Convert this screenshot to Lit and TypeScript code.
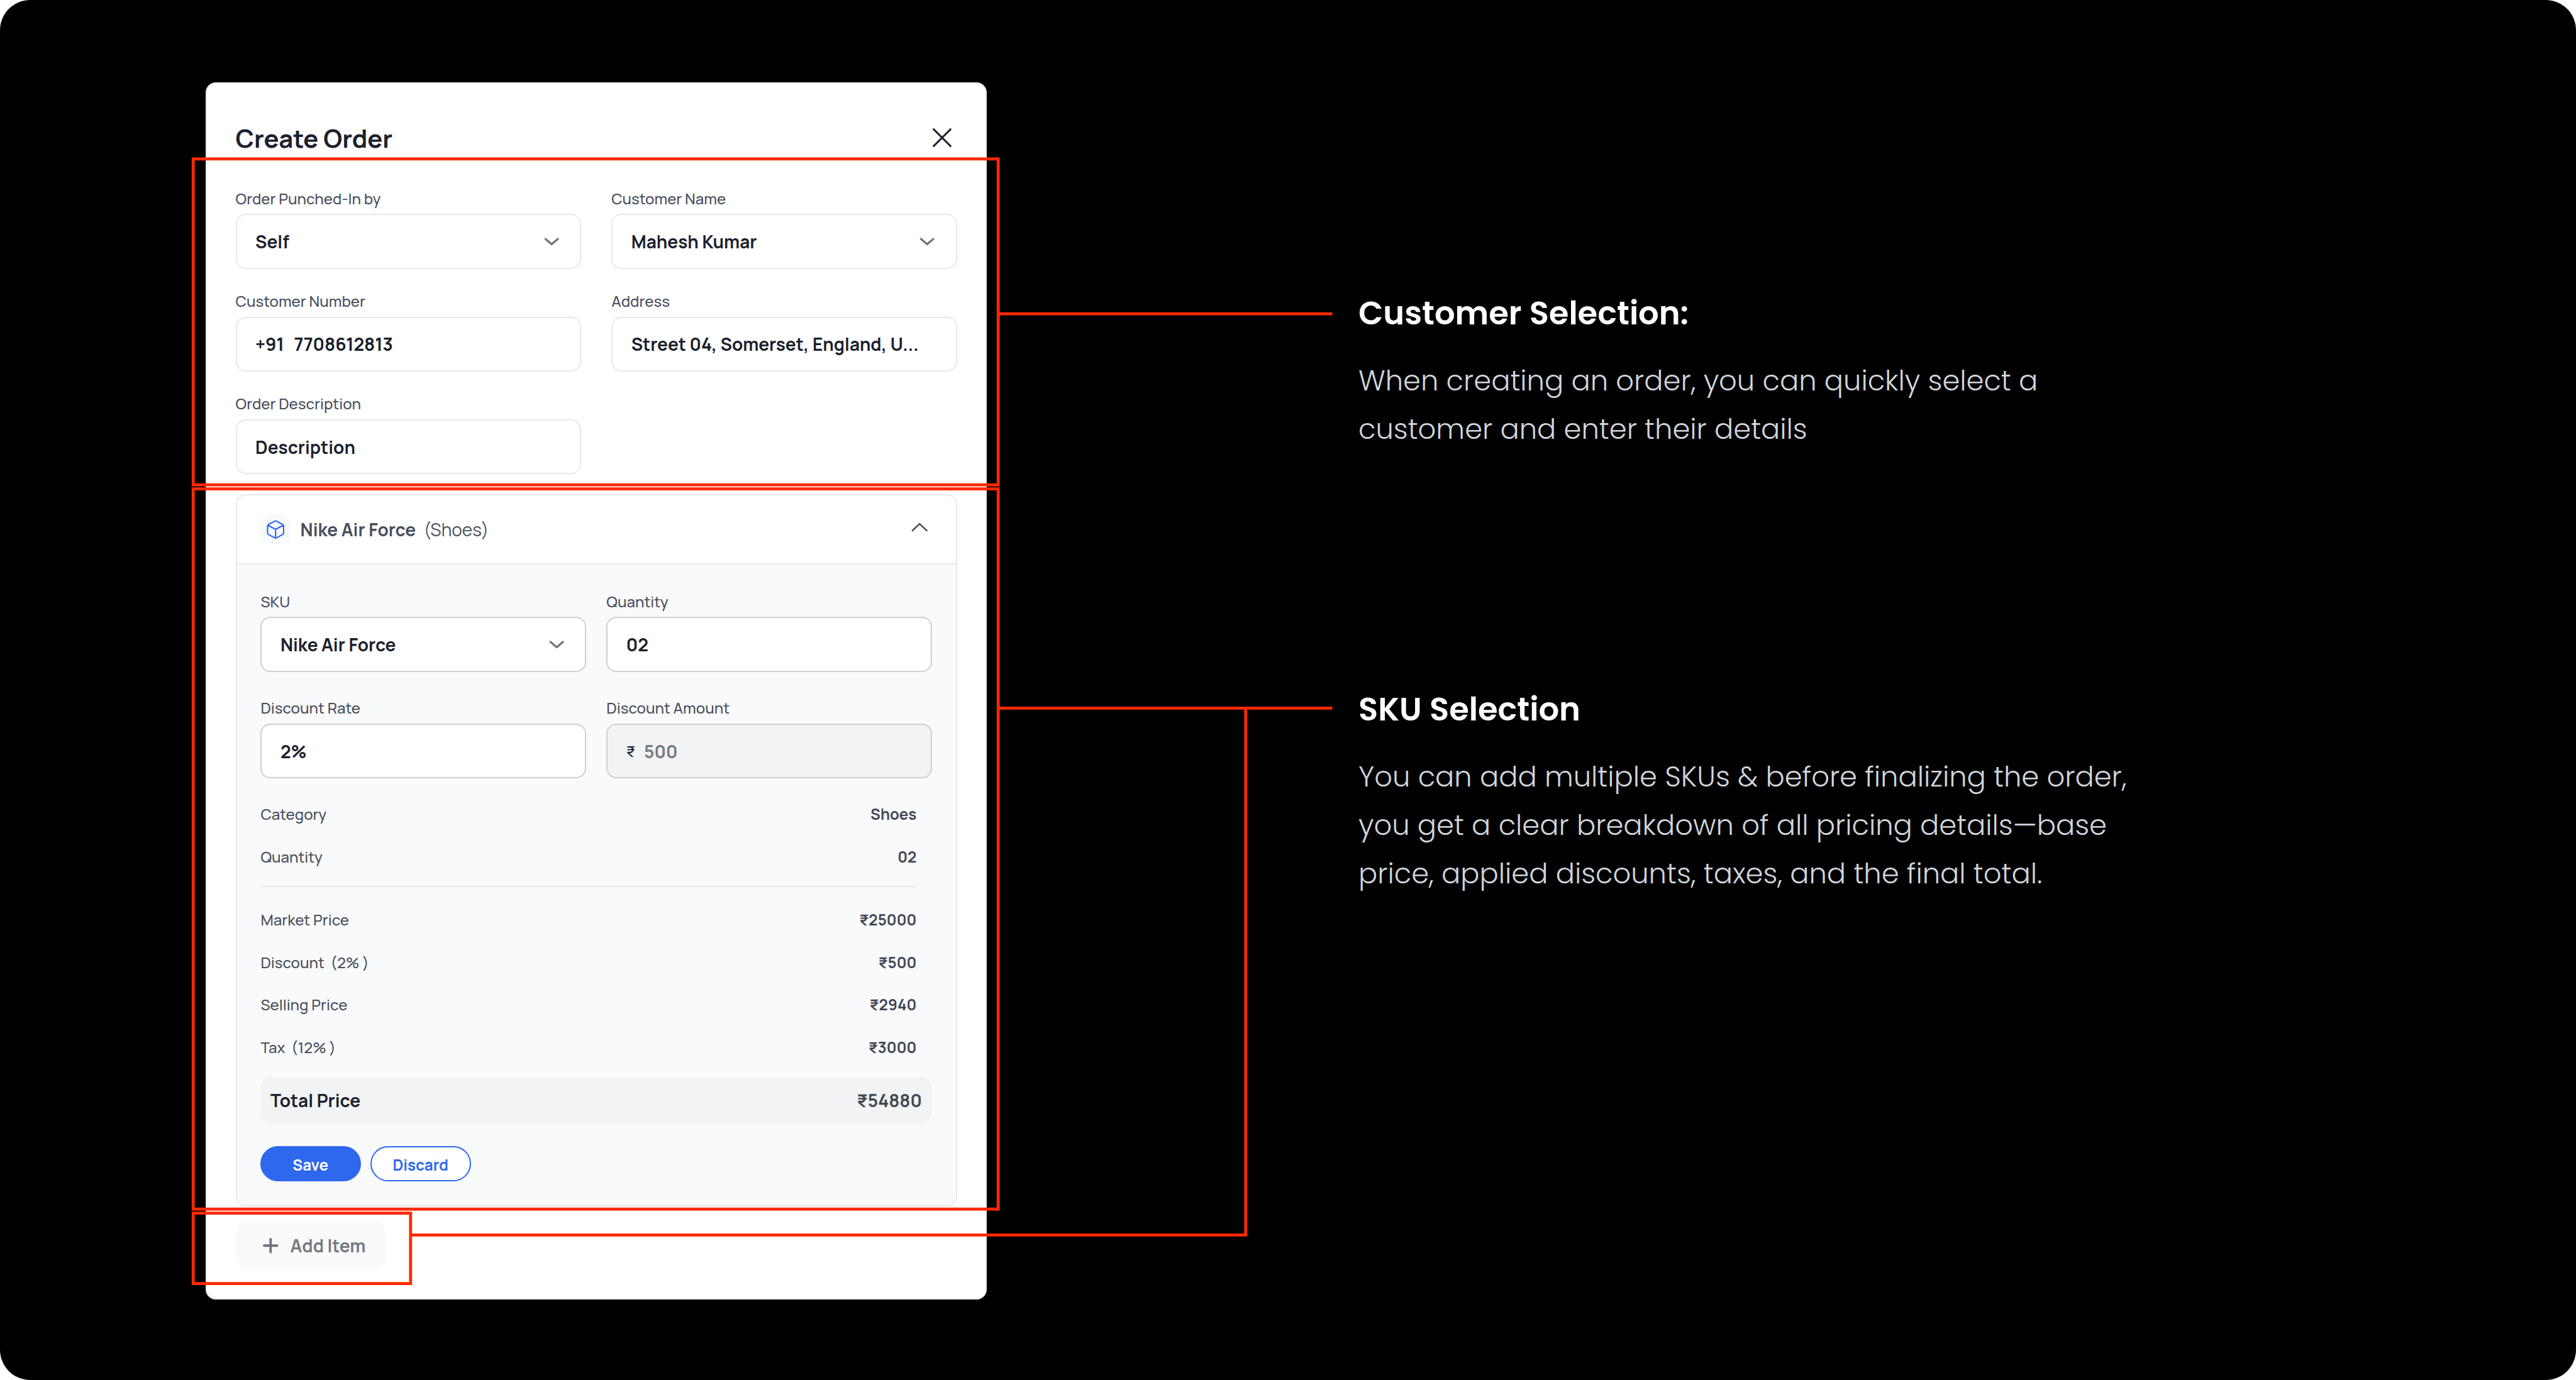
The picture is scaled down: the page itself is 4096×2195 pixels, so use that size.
import { LitElement, html, css, nothing } from "lit";
import { customElement } from "lit/decorators.js";

interface Field {
  label: string;
  value: string;
  select?: boolean;
  prefix?: string;
  disabled?: boolean;
}

interface Line {
  label: string;
  value: string;
}

const customerFields: Field[] = [
  { label: "Order Punched-In by", value: "Self", select: true },
  { label: "Customer Name", value: "Mahesh Kumar", select: true },
  { label: "Customer Number", value: "+91  7708612813" },
  { label: "Address", value: "Street 04, Somerset, England, U..." },
  { label: "Order Description", value: "Description" },
];

const skuFields: Field[] = [
  { label: "SKU", value: "Nike Air Force", select: true },
  { label: "Quantity", value: "02" },
  { label: "Discount Rate", value: "2%" },
  { label: "Discount Amount", value: "500", prefix: "₹", disabled: true },
];

const summary: Line[] = [
  { label: "Category", value: "Shoes" },
  { label: "Quantity", value: "02" },
];

const pricing: Line[] = [
  { label: "Market Price", value: "₹25000" },
  { label: "Discount  (2% )", value: "₹500" },
  { label: "Selling Price", value: "₹2940" },
  { label: "Tax  (12% )", value: "₹3000" },
];

const notes = [
  {
    title: "Customer Selection:",
    lines: ["When creating an order, you can quickly select a", "customer and enter their details"],
  },
  {
    title: "SKU Selection",
    lines: [
      "You can add multiple SKUs & before finalizing the order,",
      "you get a clear breakdown of all pricing details—base",
      "price, applied discounts, taxes, and the final total.",
    ],
  },
];

@customElement("app-root")
export class AppRoot extends LitElement {
  static styles = css`
    :host {
      display: block;
      background: #fff;
      font-family: "Manrope", "Inter", sans-serif;
      color: #1b212d;
    }
    * {
      box-sizing: border-box;
    }
    svg {
      display: block;
      flex: none;
      fill: none;
      stroke-linecap: round;
      stroke-linejoin: round;
    }
    .stage {
      position: relative;
      display: flex;
      align-items: flex-start;
      width: 4096px;
      height: 2195px;
      padding: 131.2px 0 0 326.5px;
      background: #000;
      border-radius: 48px;
      overflow: hidden;
    }
    .panel {
      width: 1242.6px;
      height: 1935.6px;
      padding: 62px 45.3px 0 46.1px;
      background: #fff;
      border: 2px solid #e9eaec;
      border-radius: 16px;
      flex: none;
    }
    .head {
      display: flex;
      align-items: center;
      justify-content: space-between;
      height: 48px;
      margin-bottom: 55.4px;
    }
    .title {
      padding-top: 2px;
      font-size: 39.9px;
      font-weight: 700;
      line-height: 56px;
    }
    .close {
      width: 48px;
      height: 48px;
      stroke: #1b212d;
      stroke-width: 1.45;
    }
    .grid {
      display: grid;
      grid-template-columns: 1fr 1fr;
      gap: 34.45px 48px;
    }
    .grid.sku {
      gap: 40.6px 32.4px;
    }
    .field {
      display: flex;
      flex-direction: column;
      gap: 8.8px;
    }
    .label {
      font-size: 24px;
      font-weight: 500;
      line-height: 33px;
      color: #4a505c;
      white-space: pre;
    }
    .box {
      display: flex;
      align-items: center;
      justify-content: space-between;
      height: 87.2px;
      padding: 0 29px 0 29.5px;
      background: #fff;
      border: 2px solid #e7e8ea;
      border-radius: 16px;
    }
    .sku .box {
      border-color: #cdcfd2;
    }
    .sku .box.disabled {
      background: #f2f3f5;
      justify-content: flex-start;
      gap: 14px;
    }
    .value {
      font-size: 28px;
      font-weight: 700;
      line-height: 38px;
      white-space: pre;
    }
    .phone {
      word-spacing: 2.3px;
    }
    .disabled .value {
      color: #757a81;
    }
    .prefix {
      font-size: 23.5px;
      font-weight: 500;
      line-height: 33px;
      padding-top: 2px;
    }
    .chev {
      width: 32.4px;
      height: 32.4px;
      stroke: #70757d;
      stroke-width: 1.6;
    }
    .card {
      margin-top: 31.8px;
      border: 2px solid #e7e8ea;
      border-radius: 16px;
      overflow: hidden;
    }
    .card-head {
      display: flex;
      align-items: center;
      height: 109.7px;
      padding: 0 41.8px 0 37.8px;
      border-bottom: 2px solid #e7e8ea;
    }
    .cube-box {
      display: flex;
      align-items: center;
      justify-content: center;
      width: 48px;
      height: 48px;
      margin-right: 15.2px;
      background: #f7f9fb;
      border-radius: 16px;
    }
    .cube {
      width: 32.4px;
      height: 32.4px;
      stroke: #2d68ee;
      stroke-width: 1.05;
    }
    .product,
    .kind {
      font-size: 28px;
      line-height: 38px;
      color: #4a505c;
    }
    .product {
      font-weight: 700;
      margin-right: 12.4px;
    }
    .caret {
      width: 32.4px;
      height: 32.4px;
      margin-left: auto;
      stroke: #4a505c;
      stroke-width: 1.25;
    }
    .card-body {
      padding: 41.8px 37.9px 37.5px 37.8px;
      background: #f9fafc;
    }
    .lines {
      display: flex;
      flex-direction: column;
      gap: 34.7px;
      padding-right: 24.5px;
    }
    .lines.first {
      margin-top: 39.8px;
    }
    .line {
      display: flex;
      justify-content: space-between;
      height: 33px;
    }
    .amount {
      font-size: 24.1px;
      font-weight: 700;
      line-height: 33px;
      color: #434956;
    }
    .rule {
      height: 2px;
      margin: 30.6px 24.4px 34.5px 0;
      background: #e7e8ea;
    }
    .total {
      display: flex;
      align-items: center;
      justify-content: space-between;
      height: 71.8px;
      margin-top: 32.2px;
      padding: 0 16px 0 15.5px;
      background: #f2f3f5;
      border-radius: 16px;
    }
    .total .sum {
      color: #434956;
    }
    .actions {
      display: flex;
      gap: 15px;
      margin-top: 37.6px;
    }
    .btn {
      display: flex;
      align-items: center;
      justify-content: center;
      width: 160px;
      height: 55.7px;
      padding: 2px 1.5px 0 0;
      border: 2px solid #2d68ee;
      border-radius: 28px;
      background: #fff;
      color: #2d68ee;
      font-size: 24.1px;
      font-weight: 700;
      line-height: 33px;
    }
    .btn.primary {
      background: #2d68ee;
      color: #fff;
    }
    .add {
      display: flex;
      align-items: center;
      gap: 11.5px;
      width: 238.6px;
      height: 75.4px;
      margin-top: 24.8px;
      padding-left: 35px;
      background: #f9fafc;
      border-radius: 16px;
      color: #757a81;
    }
    .plus {
      width: 40.5px;
      height: 40.5px;
      stroke: #70757d;
      stroke-width: 1.9;
    }
    .notes {
      display: flex;
      flex-direction: column;
      gap: 369px;
      margin-left: 590.9px;
      padding-top: 328.8px;
      font-family: "Poppins", "Inter", sans-serif;
    }
    .note {
      display: flex;
      flex-direction: column;
      gap: 31px;
    }
    .note-title {
      font-size: 51.2px;
      font-weight: 600;
      line-height: 76.8px;
      color: #fff;
    }
    .note-text {
      font-size: 44.8px;
      font-weight: 300;
      line-height: 76.8px;
      color: #d1d5db;
      white-space: nowrap;
    }
    .marks {
      position: absolute;
      left: 0;
      top: 0;
      width: 4096px;
      height: 2195.2px;
      stroke: #ff2a00;
      stroke-width: 6;
      stroke-linecap: butt;
      stroke-linejoin: miter;
    }
  `;

  private field(f: Field) {
    return html`<div class="field">
      <div class="label">${f.label}</div>
      <div class="box ${f.disabled ? "disabled" : ""}">
        ${f.prefix ? html`<span class="prefix">${f.prefix}</span>` : nothing}
        <span class="value ${f.value.startsWith("+") ? "phone" : ""}">${f.value}</span>
        ${f.select
          ? html`<svg class="chev" viewBox="0 0 16 16"><path d="M3.1 5.9L8 10.1L12.9 5.9" /></svg>`
          : nothing}
      </div>
    </div>`;
  }

  private line(l: Line) {
    return html`<div class="line">
      <span class="label">${l.label}</span><span class="amount">${l.value}</span>
    </div>`;
  }

  render() {
    return html`<div class="stage">
      <section class="panel">
        <header class="head">
          <div class="title">Create Order</div>
          <svg class="close" viewBox="0 0 24 24"><path d="M5.3 5.3L18.7 18.7M18.7 5.3L5.3 18.7" /></svg>
        </header>
        <div class="grid">${customerFields.map((f) => this.field(f))}</div>
        <div class="card">
          <div class="card-head">
            <div class="cube-box">
              <svg class="cube" viewBox="0 0 16 16">
                <path
                  d="M7.2 1.55Q8 1.1 8.8 1.55L13.6 4.1Q14.3 4.5 14.3 5.3V10.7Q14.3 11.5 13.6 11.9L8.8 14.5Q8 14.95 7.2 14.5L2.4 11.9Q1.7 11.5 1.7 10.7V5.3Q1.7 4.5 2.4 4.1ZM2 4.7L8 7.9L14 4.7M8 7.9V14.7"
                />
              </svg>
            </div>
            <span class="product">Nike Air Force</span>
            <span class="kind">(Shoes)</span>
            <svg class="caret" viewBox="0 0 16 16"><path d="M2.4 8.9L8 3.5L13.6 8.9" /></svg>
          </div>
          <div class="card-body">
            <div class="grid sku">${skuFields.map((f) => this.field(f))}</div>
            <div class="lines first">${summary.map((l) => this.line(l))}</div>
            <div class="rule"></div>
            <div class="lines">${pricing.map((l) => this.line(l))}</div>
            <div class="total">
              <span class="value">Total Price</span><span class="value sum">₹54880</span>
            </div>
            <div class="actions">
              <div class="btn primary">Save</div>
              <div class="btn">Discard</div>
            </div>
          </div>
        </div>
        <div class="add">
          <svg class="plus" viewBox="0 0 20 20"><path d="M10 4.9V15.1M4.9 10H15.1" /></svg>
          <span class="value">Add Item</span>
        </div>
      </section>
      <div class="notes">
        ${notes.map(
          (n) => html`<div class="note">
            <div class="note-title">${n.title}</div>
            <div>${n.lines.map((t) => html`<div class="note-text">${t}</div>`)}</div>
          </div>`
        )}
      </div>
      <svg class="marks" viewBox="0 0 5120 2744">
        <rect x="384" y="316" width="1600" height="648" />
        <rect x="384" y="972" width="1600" height="1432" />
        <rect x="384" y="2412" width="432" height="140" />
        <path d="M1984 624H2648M1984 1408H2648M2476 1408V2455.5H816" />
      </svg>
    </div>`;
  }
}
